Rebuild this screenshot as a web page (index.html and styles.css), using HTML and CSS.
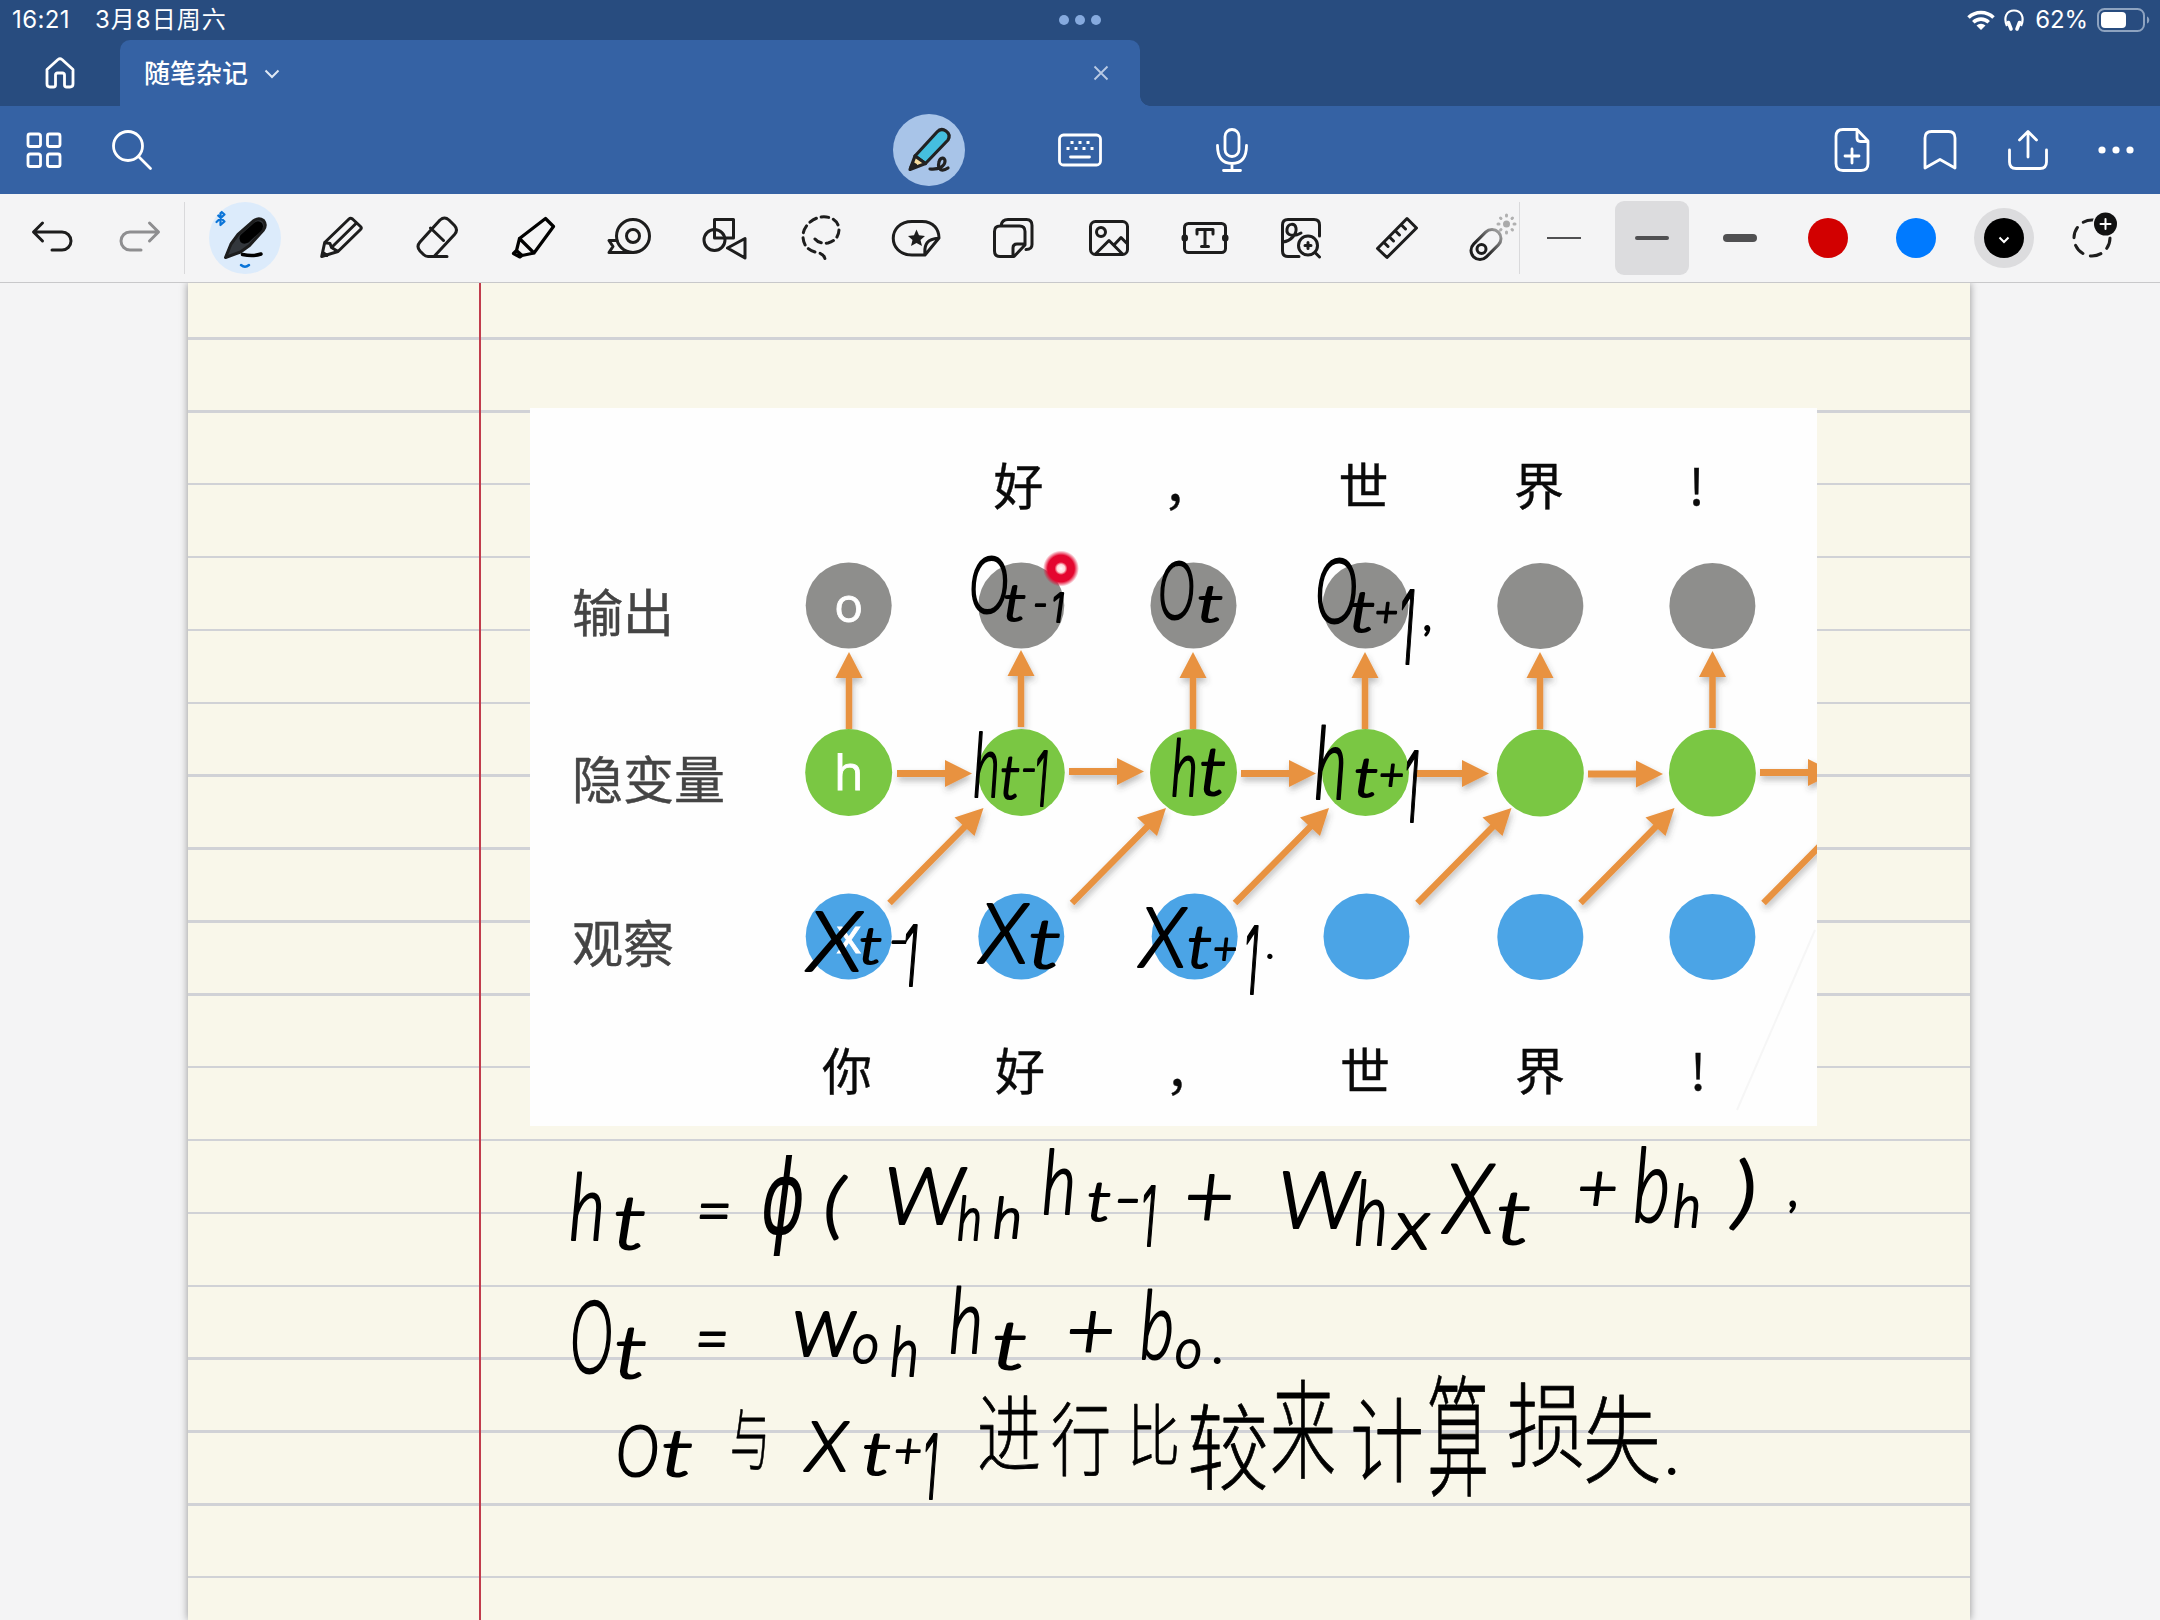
FILE: index.html
```html
<!DOCTYPE html>
<html lang="zh-CN">
<head>
<meta charset="utf-8">
<title>随笔杂记</title>
<link rel="stylesheet" href="styles.css">
</head>
<body>
<div class="app">
  <header class="top">
    <div class="status">
      <div class="status-left"><span class="time">16:21</span><span class="date">3月8日周六</span></div>
      <div class="multitask"><i></i><i></i><i></i></div>
      <div class="status-right">
        <svg class="wifi" viewBox="0 0 30 22"><path d="M2.500 8.500a18 18 0 0 1 25 0M7.300 13.200a11.200 11.200 0 0 1 15.400 0" fill="none" stroke="#fff" stroke-width="3.600"/><path d="M15 21l-4.500-4.500a6.500 6.500 0 0 1 9 0z" fill="#fff"/></svg>
        <svg class="phones" viewBox="0 0 20 22"><path d="M3 17C-1 8 3 1.500 10 1.500S21 8 17 17" fill="none" stroke="#fff" stroke-width="2.200"/><path d="M4.500 13.500l2.500 6.500M15.500 13.500L13 20" stroke="#fff" stroke-width="3.500" stroke-linecap="round"/></svg>
        <span class="percent">62%</span>
        <svg class="battery" viewBox="0 0 54 24"><rect x="1" y="1" width="46" height="22" rx="6.500" fill="none" stroke="#8ea3c0" stroke-width="2"/><rect x="4" y="4" width="25" height="16" rx="4" fill="#fff"/><path d="M50 8.500c3 1 3 6 0 7z" fill="#8ea3c0"/></svg>
      </div>
    </div>
    <div class="tabs">
      <div class="home"><svg class="icon" viewBox="-36 -36 72 72"><path d="M-13-3.500L-2-13.500q2-1.500 4 0L13-3.500V11q0 3-3 3H6.500q-2 0-2-2V2q0-2-2-2h-5q-2 0-2 2v10q0 2-2 2H-10q-3 0-3-3z"/></svg></div>
      <div class="tab">
        <span class="tab-title">随笔杂记</span>
        <svg class="tab-chevron" viewBox="0 0 16 10"><path d="M1.500 1.500L8 8l6.500-6.500"/></svg>
        <svg class="tab-close" viewBox="0 0 16 16"><path d="M1.500 1.500l13 13M14.500 1.500l-13 13"/></svg>
      </div>
      <div class="tab-foot"></div>
    </div>
  </header>

  <nav class="nav">
    <div class="nav-group nav-left">
      <svg class="icon" viewBox="-36 -36 72 72"><rect x="-16" y="-16" width="12.500" height="12.500" rx="2"/><rect x="3.500" y="-16" width="12.500" height="12.500" rx="2"/><rect x="-16" y="4" width="12.500" height="12.500" rx="2"/><rect x="3.500" y="4" width="12.500" height="12.500" rx="2"/></svg>
      <svg class="icon" viewBox="-36 -36 72 72"><circle cx="-4" cy="-4" r="14.500"/><path d="M7 7L18.500 18.500"/></svg>
    </div>
    <div class="nav-group nav-mid">
      <svg class="icon active" viewBox="-36 -36 72 72">
        <path d="M-14 6L8-18q4-4.500 9-1t2 9L-3.500 13.500z" fill="#45bfdf"/>
        <path d="M-14 6l-5 13.500L-3.500 13.500z" fill="#f6dc9c"/>
        <path d="M-18 17l4.500-2-2.500-1.500z" fill="#222"/>
        <path d="M1 19c9 1 15-3 15-8 0-4-5-4-6 1-2 8 3 10 9 6"/>
      </svg>
      <svg class="icon" viewBox="-36 -36 72 72"><rect x="-20.500" y="-15" width="41" height="30" rx="4"/><path d="M-9.500 7h19"/><g fill="#fff" stroke="none"><rect x="-9.500" y="-9" width="3" height="3"/><rect x="-1.500" y="-9" width="3" height="3"/><rect x="6.500" y="-9" width="3" height="3"/><rect x="-13.500" y="-3" width="3" height="3"/><rect x="-5.500" y="-3" width="3" height="3"/><rect x="2.500" y="-3" width="3" height="3"/><rect x="10.500" y="-3" width="3" height="3"/></g></svg>
      <svg class="icon" viewBox="-36 -36 72 72"><rect x="-7" y="-20.500" width="14" height="27" rx="7"/><path d="M-14.500-4.500C-14.500 8-9 13.500 0 13.500S14.500 8 14.500-4.500M0 14v6M-8.500 20.500h17"/></svg>
    </div>
    <div class="nav-group nav-right">
      <svg class="icon" viewBox="-36 -36 72 72"><path d="M5-20.500H-9q-7 0-7 7v27q0 7 7 7H9q7 0 7-7V-9zM5-20.500V-12q0 3.500 3.500 3.500H16M0-1v14M-7 6H7"/></svg>
      <svg class="icon" viewBox="-36 -36 72 72"><path d="M-15 18v-30q0-6.500 6.500-6.500h17q6.500 0 6.500 6.500v30L0 9.500z"/></svg>
      <svg class="icon" viewBox="-36 -36 72 72"><path d="M-18.500 0v12q0 6.500 6.500 6.500h24q6.500 0 6.500-6.500V0M0 7v-25M-8.500-10L0-18.500 8.500-10"/></svg>
      <svg class="icon" viewBox="-36 -36 72 72"><g fill="#fff" stroke="none"><circle cx="-14" r="3.600"/><circle r="3.600"/><circle cx="14" r="3.600"/></g></svg>
    </div>
  </nav>

  <section class="tools">
    <div class="history">
      <svg class="icon dark" viewBox="-36 -36 72 72"><path d="M-9.500-15l-9 9 9 9M-18-6H10a9 9 0 0 1 0 18H0"/></svg>
      <svg class="icon dim" viewBox="-36 -36 72 72"><path d="M9.500-15l9 9-9 9M18-6H-10a9 9 0 0 0 0 18H1"/></svg>
    </div>
    <div class="divider"></div>
    <div class="kit">
      <div class="cell"><svg class="icon dark pen" viewBox="-36 -36 72 72">
        <path d="M-19.500 19.500L-14 6-7-3.500 9-17.500q5-3.500 9.500 0 3.500 4.500 0 9.500L4.500 7.500l-9 6.500z" fill="#33373c"/>
        <path d="M-4.500-3L9-15q4-3.500 8 0 2.500 4-1 8L3.500 4.500q-5 2.500-8-.5-2-4 0-7z" fill="#000" stroke="none"/>
        <path d="M-2.500 16.500c7 1.500 13 1.500 18.500-.5" stroke="#000" stroke-width="3.500"/>
        <path d="M-4 27q4 3.500 8 0" stroke="#0a74d8" stroke-width="2.500"/>
        <path d="M-28.500-24l8 7.500-4 3.500v-14l4 3.500-8 7.500" stroke="#0a74d8" stroke-width="2.200"/>
      </svg></div>
      <div class="cell"><svg class="icon dark" viewBox="-36 -36 72 72"><path d="M-19.300 18.500l3-14L8-19q1.500-1.500 3.500 0L19.500-11.500q1.500 1.500 0 3L-3 13.500zM-16.300 4.500L-11 5.500l1.500 4 6.500 4M-9.500 9.500L15.500-15M-18 14.500l4 3"/></svg></div>
      <div class="cell"><svg class="icon dark" viewBox="-36 -36 72 72"><path d="M10 18.500H-9q-2.500 0-4.500-2l-3.500-3.500q-4-4.500 0-9L3-18q4.500-4 9 0l5.500 5.500q4 4.500 0 9L-2.500 18M-6.500-10L6.500 2.500"/></svg></div>
      <div class="cell"><svg class="icon marker" viewBox="-36 -36 72 72"><path d="M-13.500.5L12.500-19.500 20.500-11.500 1 15zM-13.500.5L-16.500 12.500-19.500 15.500-13 19-11 17.500 1 15M-16.500 12.500l5.500 5"/></svg></div>
      <div class="cell"><svg class="icon dark" viewBox="-36 -36 72 72"><circle cx="4" cy="-2" r="16.500"/><circle cx="4" cy="-2" r="6.500"/><path d="M4 14.500h-24l4-6-4-6h8"/></svg></div>
      <div class="cell"><svg class="icon dark" viewBox="-36 -36 72 72"><circle cx="-10.500" cy="2" r="10.500"/><path d="M-10.500 0v-18.500H8.500V0zM2.500 10L20 .5V20z"/></svg></div>
      <div class="cell"><svg class="icon dark" viewBox="-36 -36 72 72"><path d="M-6 1q4 5 13 4 11-3 11-14C17-19 8-22 0-21S-18-12-18-2C-18 8-12 13-4 14.500q7 1 8 6.500" stroke-dasharray="7.500 5"/></svg></div>
      <div class="cell"><svg class="icon dark" viewBox="-36 -36 72 72"><path d="M8 17H-5C-30 17-30-16.500-5-16.500H5C17-16.500 22-8 22 0zM22 0C10 1 7 6 8 17"/><path d="M-.5-8.500l2.500 5.800 6 .6L3.500 2l1.500 6-5.500-3L-6 8l1.500-6L-9-2.100l6-.6z" fill="#1d1d1d" stroke="none"/></svg></div>
      <div class="cell"><svg class="icon dark" viewBox="-36 -36 72 72"><path d="M1 18.500h-14q-5.500 0-5.500-5.500V-6.500q0-5.500 5.500-5.500H6.500q5.500 0 5.500 5.500V7zM0 18V10q0-4 4-4h8M-12-12.500q1-6 7-6H13.500q5.500 0 5.500 6V6.500q0 5-6 5"/></svg></div>
      <div class="cell"><svg class="icon dark" viewBox="-36 -36 72 72"><rect x="-18.500" y="-16.500" width="37" height="33" rx="5"/><circle cx="-8" cy="-6" r="4.500"/><path d="M-13 15.500L0 2.500 13 15.500M5 7L12-.5l6.500 6.500"/></svg></div>
      <div class="cell"><svg class="icon dark" viewBox="-36 -36 72 72"><rect x="-20.500" y="-14.500" width="41" height="29" rx="4"/><path d="M-8-4v-4.500H8V-4M0-8V8M-3.500 8.500h7"/><rect x="-22" y="-2" width="3.500" height="4" rx="1.500" fill="#1d1d1d"/><rect x="18.500" y="-2" width="3.500" height="4" rx="1.500" fill="#1d1d1d"/></svg></div>
      <div class="cell"><svg class="icon dark" viewBox="-36 -36 72 72"><path d="M18.500-2v-11q0-5.500-5.500-5.500h-26q-5.500 0-5.500 5.500v26q0 5.500 5.500 5.500H-2"/><path d="M-18 4c8-1 14-8 13-14-1-5-8-5-9 1-1 7 7 8 14 4"/><circle cx="7" cy="7.500" r="9.500"/><path d="M14 14.500l4.500 4.500M7 4.500v6M4 7.500h6"/></svg></div>
      <div class="cell"><svg class="icon dark" viewBox="-36 -36 72 72"><path d="M-19.500 10.500L10-19.500 19.500-10-10 19.500zM-13 4.500l4 4M-7.500-1l4 4M-1.500-7l4 4M4.500-13l4 4"/></svg></div>
      <div class="cell last"><svg class="icon dark" viewBox="-36 -36 72 72"><defs><linearGradient id="fade" x1="0" y1="0" x2="1" y2="0"><stop offset=".3" stop-color="#1d1d1d"/><stop offset="1" stop-color="#999"/></linearGradient></defs><rect x="-17.500" y="-9" width="35" height="18" rx="9" transform="translate(-3 6.500) rotate(-45)" stroke="url(#fade)"/><circle cx="-7.500" cy="11" r="4.500"/><circle cx="17.500" cy="-14" r="3.500" fill="#aaa" stroke="none"/><path d="M17.500-22v-1M17.500-6v1M10-14h-1M25-14h1M12-19.500l-.5-.5M23-19.500l.5-.5M12-8.500l-.5.5M23-8.500l.5.5" stroke="#b0b0b0"/></svg></div>
    </div>
    <div class="divider"></div>
    <div class="strokes">
      <div class="cell"><i class="bar thin"></i></div>
      <div class="cell"><div class="chosen"><i class="bar medium"></i></div></div>
      <div class="cell"><i class="bar thick"></i></div>
      <div class="cell"><i class="swatch red"></i></div>
      <div class="cell"><i class="swatch blue"></i></div>
      <div class="cell"><div class="ring"><div class="swatch black"><svg viewBox="0 0 12 8"><path d="M1.500 1.500L6 6l4.500-4.500"/></svg></div></div></div>
      <div class="cell"><svg class="icon dark" viewBox="-36 -36 72 72"><circle cx="0" cy="0" r="18" stroke-dasharray="11 7.800"/><circle cx="13.500" cy="-14" r="13" fill="#f4f4f5" stroke="none"/><circle cx="13.500" cy="-14" r="11.500" fill="#111" stroke="none"/><path d="M13.500-19v10M8.500-14h10" stroke="#fff" stroke-width="2"/></svg></div>
    </div>
  </section>

  <main class="desk">
    <div class="paper">
      <!-- note canvas, in window coordinates -->
      <svg class="canvas" viewBox="188 283 1782 1337">
        <defs>
          <g id="up"><path d="M0 24V77" stroke="#e8923f" stroke-width="6.500"/><path d="M0 0L13.500 26h-27z" fill="#e8923f"/></g>
          <g id="right"><path d="M0 0H50" stroke="#e8923f" stroke-width="7"/><path d="M75 0L48-13.500v27z" fill="#e8923f"/></g>
          <g id="diag"><path d="M0 0L80-81" stroke="#e8923f" stroke-width="6.500"/><path d="M94-95L65-85.500 85-67z" fill="#e8923f"/></g>
          <filter id="soft" x="-20%" y="-20%" width="140%" height="140%"><feDropShadow dx="1" dy="4" stdDeviation="3" flood-color="#444" flood-opacity=".35"/></filter>
          <clipPath id="frame"><rect x="530" y="408" width="1287" height="718"/></clipPath>
          <radialGradient id="laser"><stop offset="0" stop-color="#fff"/><stop offset=".22" stop-color="#ffd9d9"/><stop offset=".36" stop-color="#e4062f"/><stop offset=".74" stop-color="#e4062f"/><stop offset="1" stop-color="#e4062f" stop-opacity="0"/></radialGradient>
        </defs>
        <rect x="530" y="408" width="1287" height="718" fill="#fefefe"/>
        <g clip-path="url(#frame)">
          <path d="M1815 930L1737 1110" stroke="#f6f6f6" stroke-width="2"/>
          <g filter="url(#soft)">
            <use href="#up" x="849" y="652"/><use href="#up" x="1021" y="650"/><use href="#up" x="1193" y="652"/><use href="#up" x="1365" y="652"/><use href="#up" x="1540" y="652"/><use href="#up" x="1712.500" y="651"/>
            <use href="#right" x="897" y="773.500"/><use href="#right" x="1069" y="771.500"/><use href="#right" x="1241" y="773.500"/><use href="#right" x="1414" y="773.500"/><use href="#right" x="1588" y="774"/><use href="#right" x="1760" y="772.500"/>
            <use href="#diag" x="889.500" y="903"/><use href="#diag" x="1072" y="903"/><use href="#diag" x="1235" y="903"/><use href="#diag" x="1417.500" y="903"/><use href="#diag" x="1580.500" y="903"/><use href="#diag" x="1763.500" y="903"/>
          </g>
          <g fill="#8e8e8c"><circle cx="848.700" cy="605.500" r="43"/><circle cx="1021.300" cy="605.500" r="43"/><circle cx="1193.500" cy="605.500" r="43"/><circle cx="1365.500" cy="605.500" r="43"/><circle cx="1540.300" cy="606" r="43"/><circle cx="1712.400" cy="606" r="43"/></g>
          <g fill="#7ac743"><circle cx="848.700" cy="772.500" r="43.500"/><circle cx="1021.300" cy="772.500" r="43.500"/><circle cx="1193.500" cy="772.500" r="43.500"/><circle cx="1365.500" cy="772.500" r="43.500"/><circle cx="1540.300" cy="773" r="43.500"/><circle cx="1712.400" cy="773" r="43.500"/></g>
          <g fill="#4ba4e6"><circle cx="848.700" cy="936.500" r="43"/><circle cx="1021.300" cy="936.500" r="43"/><circle cx="1194.700" cy="936.500" r="43"/><circle cx="1366.500" cy="936.500" r="43"/><circle cx="1540.300" cy="937" r="43"/><circle cx="1712.400" cy="937" r="43"/></g>
        </g>
        <g class="state"><text x="848.700" y="622">o</text><text x="848.700" y="790">h</text><text x="848.700" y="953">x</text></g>
        <g class="caption"><text x="572" y="632">输出</text><text x="572" y="798.500">隐变量</text><text x="572" y="963">观察</text></g>
        <g class="words">
          <text x="1018.500" y="505">好</text><text x="1188" y="505">，</text><text x="1363.500" y="505">世</text><text x="1539" y="505">界</text><text x="1696.500" y="505">!</text>
          <text x="847" y="1089.500">你</text><text x="1020" y="1089.500">好</text><text x="1190" y="1089.500">，</text><text x="1365" y="1089.500">世</text><text x="1540" y="1089.500">界</text><text x="1698" y="1089.500">!</text>
        </g>
        <circle cx="1061" cy="568.500" r="18" fill="url(#laser)"/>
        <g class="ink">
          <text><tspan x="969" y="613" font-size="79" textLength="40" lengthAdjust="spacingAndGlyphs">O</tspan><tspan x="1003" y="621" font-size="51" textLength="23" lengthAdjust="spacingAndGlyphs">t</tspan><tspan x="1033" y="618" font-size="44" textLength="15" lengthAdjust="spacingAndGlyphs">-</tspan><tspan class="one" x="1051" y="622" font-size="40" textLength="13" lengthAdjust="spacingAndGlyphs">1</tspan></text>
          <text><tspan x="1158" y="619" font-size="80" textLength="37" lengthAdjust="spacingAndGlyphs">O</tspan><tspan x="1197" y="622" font-size="51" textLength="26" lengthAdjust="spacingAndGlyphs">t</tspan></text>
          <text><tspan x="1315" y="623" font-size="90" textLength="43" lengthAdjust="spacingAndGlyphs">O</tspan><tspan x="1349" y="632" font-size="57" textLength="26" lengthAdjust="spacingAndGlyphs">t</tspan><tspan x="1375" y="626" font-size="40" textLength="23" lengthAdjust="spacingAndGlyphs">+</tspan><tspan class="one" x="1398" y="664" font-size="102" textLength="17" lengthAdjust="spacingAndGlyphs">1</tspan><tspan x="1424" y="630" font-size="44">,</tspan></text>
          <text><tspan x="973" y="797" font-size="88" textLength="27" lengthAdjust="spacingAndGlyphs">h</tspan><tspan x="1000" y="799" font-size="62" textLength="20" lengthAdjust="spacingAndGlyphs">t</tspan><tspan x="1021" y="783" font-size="44" textLength="16" lengthAdjust="spacingAndGlyphs">-</tspan><tspan class="one" x="1034" y="806" font-size="75" textLength="14" lengthAdjust="spacingAndGlyphs">1</tspan></text>
          <text><tspan x="1171" y="796" font-size="78" textLength="27" lengthAdjust="spacingAndGlyphs">h</tspan><tspan x="1199" y="795" font-size="68" textLength="27" lengthAdjust="spacingAndGlyphs">t</tspan></text>
          <text><tspan x="1314" y="799" font-size="100" textLength="33" lengthAdjust="spacingAndGlyphs">h</tspan><tspan x="1354" y="797" font-size="55" textLength="24" lengthAdjust="spacingAndGlyphs">t</tspan><tspan x="1379" y="790" font-size="44" textLength="25" lengthAdjust="spacingAndGlyphs">+</tspan><tspan class="one" x="1403" y="822" font-size="97" textLength="16" lengthAdjust="spacingAndGlyphs">1</tspan></text>
          <text><tspan x="808" y="971" font-size="83" textLength="54" lengthAdjust="spacingAndGlyphs">X</tspan><tspan x="859" y="964" font-size="52" textLength="23" lengthAdjust="spacingAndGlyphs">t</tspan><tspan x="889" y="955" font-size="44" textLength="20" lengthAdjust="spacingAndGlyphs">-</tspan><tspan class="one" x="902" y="986" font-size="84" textLength="16" lengthAdjust="spacingAndGlyphs">1</tspan></text>
          <text><tspan x="980" y="963" font-size="82" textLength="48" lengthAdjust="spacingAndGlyphs">X</tspan><tspan x="1028" y="968" font-size="70" textLength="33" lengthAdjust="spacingAndGlyphs">t</tspan></text>
          <text><tspan x="1140" y="967" font-size="82" textLength="46" lengthAdjust="spacingAndGlyphs">X</tspan><tspan x="1187" y="968" font-size="60" textLength="25" lengthAdjust="spacingAndGlyphs">t</tspan><tspan x="1213" y="964" font-size="44" textLength="24" lengthAdjust="spacingAndGlyphs">+</tspan><tspan class="one" x="1243" y="994" font-size="94" textLength="16" lengthAdjust="spacingAndGlyphs">1</tspan><tspan x="1267" y="958" font-size="34">.</tspan></text>

          <text><tspan x="569" y="1240" font-size="93" textLength="36" lengthAdjust="spacingAndGlyphs">h</tspan><tspan x="613" y="1249" font-size="74" textLength="33" lengthAdjust="spacingAndGlyphs">t</tspan><tspan x="696" y="1235" font-size="70" textLength="36" lengthAdjust="spacingAndGlyphs">=</tspan><tspan class="phi" x="761" y="1234" font-size="103" textLength="44" lengthAdjust="spacingAndGlyphs">ϕ</tspan><tspan x="823" y="1230" font-size="72" textLength="22" lengthAdjust="spacingAndGlyphs">(</tspan><tspan x="884" y="1224" font-size="78" textLength="80" lengthAdjust="spacingAndGlyphs">W</tspan><tspan x="957" y="1240" font-size="62" textLength="25" lengthAdjust="spacingAndGlyphs">h</tspan><tspan x="993" y="1238" font-size="58" textLength="29" lengthAdjust="spacingAndGlyphs">h</tspan><tspan x="1042" y="1214" font-size="88" textLength="34" lengthAdjust="spacingAndGlyphs">h</tspan><tspan x="1087" y="1221" font-size="56" textLength="24" lengthAdjust="spacingAndGlyphs">t</tspan><tspan x="1114" y="1217" font-size="56" textLength="28" lengthAdjust="spacingAndGlyphs">-</tspan><tspan class="one" x="1140" y="1246" font-size="83" textLength="16" lengthAdjust="spacingAndGlyphs">1</tspan><tspan x="1184" y="1228" font-size="90" textLength="50" lengthAdjust="spacingAndGlyphs">+</tspan><tspan x="1278" y="1228" font-size="78" textLength="80" lengthAdjust="spacingAndGlyphs">W</tspan><tspan x="1354" y="1245" font-size="88" textLength="34" lengthAdjust="spacingAndGlyphs">h</tspan><tspan x="1394" y="1249" font-size="72" textLength="36" lengthAdjust="spacingAndGlyphs">x</tspan><tspan x="1444" y="1233" font-size="97" textLength="50" lengthAdjust="spacingAndGlyphs">X</tspan><tspan x="1496" y="1244" font-size="75" textLength="35" lengthAdjust="spacingAndGlyphs">t</tspan><tspan x="1577" y="1211" font-size="68" textLength="41" lengthAdjust="spacingAndGlyphs">+</tspan><tspan x="1633" y="1222" font-size="103" textLength="37" lengthAdjust="spacingAndGlyphs">b</tspan><tspan x="1673" y="1227" font-size="60" textLength="28" lengthAdjust="spacingAndGlyphs">h</tspan><tspan x="1732" y="1219" font-size="78" textLength="25" lengthAdjust="spacingAndGlyphs">)</tspan><tspan x="1789" y="1206" font-size="50">,</tspan></text>

          <text><tspan x="570" y="1373" font-size="100" textLength="43" lengthAdjust="spacingAndGlyphs">O</tspan><tspan x="614" y="1378" font-size="73" textLength="33" lengthAdjust="spacingAndGlyphs">t</tspan><tspan x="695" y="1363" font-size="70" textLength="34" lengthAdjust="spacingAndGlyphs">=</tspan><tspan x="792" y="1356" font-size="88" textLength="64" lengthAdjust="spacingAndGlyphs">w</tspan><tspan x="852" y="1363" font-size="56" textLength="27" lengthAdjust="spacingAndGlyphs">o</tspan><tspan x="890" y="1376" font-size="69" textLength="29" lengthAdjust="spacingAndGlyphs">h</tspan><tspan x="949" y="1353" font-size="90" textLength="34" lengthAdjust="spacingAndGlyphs">h</tspan><tspan x="992" y="1369" font-size="68" textLength="35" lengthAdjust="spacingAndGlyphs">t</tspan><tspan x="1066" y="1359" font-size="80" textLength="49" lengthAdjust="spacingAndGlyphs">+</tspan><tspan x="1140" y="1359" font-size="95" textLength="34" lengthAdjust="spacingAndGlyphs">b</tspan><tspan x="1175" y="1368" font-size="56" textLength="27" lengthAdjust="spacingAndGlyphs">o</tspan><tspan x="1213" y="1363" font-size="50">.</tspan></text>

          <text><tspan x="616" y="1476" font-size="71" textLength="43" lengthAdjust="spacingAndGlyphs">O</tspan><tspan x="661" y="1476" font-size="65" textLength="32" lengthAdjust="spacingAndGlyphs">t</tspan><tspan class="han" x="730" y="1465" font-size="68" textLength="40" lengthAdjust="spacingAndGlyphs">与</tspan><tspan x="806" y="1471" font-size="70" textLength="42" lengthAdjust="spacingAndGlyphs">X</tspan><tspan x="862" y="1475" font-size="60" textLength="29" lengthAdjust="spacingAndGlyphs">t</tspan><tspan x="894" y="1467" font-size="48" textLength="28" lengthAdjust="spacingAndGlyphs">+</tspan><tspan class="one" x="922" y="1499" font-size="90" textLength="16" lengthAdjust="spacingAndGlyphs">1</tspan><tspan class="han" x="977" y="1465" font-size="84" textLength="64" lengthAdjust="spacingAndGlyphs">进</tspan><tspan class="han" x="1051" y="1469" font-size="80" textLength="60" lengthAdjust="spacingAndGlyphs">行</tspan><tspan class="han" x="1127" y="1461" font-size="68" textLength="53" lengthAdjust="spacingAndGlyphs">比</tspan><tspan class="han" x="1187" y="1483" font-size="94" textLength="82" lengthAdjust="spacingAndGlyphs">较</tspan><tspan class="han" x="1270" y="1470" font-size="108" textLength="66" lengthAdjust="spacingAndGlyphs">来</tspan><tspan class="han" x="1350" y="1475" font-size="92" textLength="74" lengthAdjust="spacingAndGlyphs">计</tspan><tspan class="han" x="1427" y="1486" font-size="132" textLength="62" lengthAdjust="spacingAndGlyphs">算</tspan><tspan class="han" x="1507" y="1460" font-size="92" textLength="78" lengthAdjust="spacingAndGlyphs">损</tspan><tspan class="han" x="1583" y="1475" font-size="96" textLength="78" lengthAdjust="spacingAndGlyphs">失</tspan><tspan x="1667" y="1474" font-size="56">.</tspan></text>
        </g>
      </svg>
    </div>
  </main>
</div>
</body>
</html>
```
FILE: styles.css
```css
* { box-sizing: border-box; }
body { margin: 0; font-family: Inter, "Noto Sans CJK SC", sans-serif; }
.app { width: 2160px; height: 1620px; display: flex; flex-direction: column; overflow: hidden; background: #f4f4f5; }
.icon { width: 72px; height: 72px; flex: none; fill: none; stroke: #fff; stroke-width: 2.8; stroke-linecap: round; stroke-linejoin: round; }
.icon.dark { stroke: #1d1d1d; stroke-width: 3; }
.icon.marker { stroke: #000; stroke-width: 3.2; }
.icon.dim { stroke: #8e8e90; stroke-width: 3; }

.top { height: 106px; background: #284c7f; color: #fff; flex: none; }
.status { height: 40px; display: grid; grid-template-columns: 1fr auto 1fr; align-items: center; font-size: 24px; line-height: 40px; }
.status-left { display: flex; gap: 25px; padding-left: 12px; }
.time { letter-spacing: .4px; }
.date { letter-spacing: 1px; }
.multitask { display: flex; gap: 6px; }
.multitask i { width: 10px; height: 10px; border-radius: 50%; background: #86aade; }
.status-right { display: flex; justify-content: flex-end; align-items: center; padding-right: 9px; }
.wifi { width: 30px; height: 22px; margin-right: 8px; }
.phones { width: 20px; height: 22px; margin-right: 11px; }
.percent { margin-right: 9px; letter-spacing: -.1px; }
.battery { width: 54px; height: 24px; }
.tabs { height: 66px; display: flex; }
.home { width: 120px; display: flex; align-items: center; justify-content: center; }
.tab { width: 1020px; display: flex; align-items: center; background: #3562a4; border-radius: 10px 10px 0 0; padding: 0 31px 0 24px; }
.tab-title { font-size: 26px; font-weight: 500; line-height: 64px; padding-top: 2px; }
.tab-chevron { width: 16px; height: 10px; margin-left: 16px; margin-top: 1px; fill: none; stroke: #dfe8f5; stroke-width: 2; }
.tab-close { width: 16px; height: 16px; margin-left: auto; fill: none; stroke: #b9cae4; stroke-width: 1.8; }
.tab-foot { width: 10px; height: 10px; align-self: flex-end; background: radial-gradient(circle at 100% 0, transparent 9.5px, #3562a4 10px); }

.nav { height: 88px; flex: none; background: #3562a4; display: grid; grid-template-columns: 1fr auto 1fr; align-items: center; }
.nav-group { display: flex; }
.nav-left, .nav-right { gap: 16px; padding: 0 8px; }
.nav-right { justify-content: flex-end; }
.nav-mid { gap: 79.5px; }
.icon.active { background: #a8c4e8; border-radius: 50%; stroke: #222; stroke-width: 3.2; }

.tools { height: 89px; flex: none; display: flex; align-items: center; background: #f4f4f5; border-bottom: 1px solid #c8c8ca; }
.history { display: flex; gap: 16px; width: 184px; padding-left: 16px; }
.divider { width: 1px; height: 72px; background: #d9d9db; flex: none; }
.kit { display: flex; width: 1334px; padding-left: 12px; }
.cell { width: 96px; height: 88px; display: flex; align-items: center; justify-content: center; flex: none; }
.cell.last { width: 88px; }
.pen { background: #dcebfb; border-radius: 50%; }
.strokes { display: flex; }
.strokes .cell { width: 88px; }
.bar { display: block; width: 34px; background: #505052; }
.thin { height: 2px; }
.medium { height: 4px; border-radius: 2px; }
.thick { height: 8px; border-radius: 4px; }
.chosen { width: 74px; height: 74px; border-radius: 9px; background: #dcdcde; display: flex; align-items: center; justify-content: center; }
.swatch { width: 40px; height: 40px; border-radius: 50%; display: flex; align-items: center; justify-content: center; }
.red { background: #d20000; }
.blue { background: #007aff; }
.black { background: #000; }
.black svg { width: 12px; height: 8px; margin-top: 3px; fill: none; stroke: #fff; stroke-width: 2; }
.ring { width: 60px; height: 60px; border-radius: 50%; background: #dcdcde; display: flex; align-items: center; justify-content: center; }

.desk { flex: 1; display: flex; justify-content: center; padding-right: 2px; min-height: 0; overflow: hidden; }
.paper {
  width: 1782px; height: 1337px; box-shadow: 0 0 8px rgba(0, 0, 0, .4);
  background:
    linear-gradient(90deg, transparent 291px, #c13c4c 291px, #c13c4c 293.5px, transparent 293.5px),
    repeating-linear-gradient(180deg, transparent 0, transparent 54.2px, #d1d2d6 54.2px, #d1d2d6 56.7px, transparent 56.7px, transparent 72.87px),
    #f9f7ea;
}
.canvas { display: block; width: 1782px; height: 1337px; }
.state { font-family: "Open Sans", sans-serif; font-size: 48px; fill: #fff; stroke: #fff; stroke-width: .8; text-anchor: middle; }
.caption { font-family: "Noto Sans CJK SC", sans-serif; font-size: 51px; fill: #444; stroke: #444; stroke-width: .4; }
.words { font-family: "Noto Sans CJK SC", sans-serif; font-size: 50px; fill: #0a0a0a; stroke: #0a0a0a; stroke-width: .4; text-anchor: middle; }
.ink { font-family: Lato, sans-serif; font-style: italic; font-weight: 300; fill: #000; stroke: #000; stroke-width: 2.2; stroke-linejoin: round; }
.one { font-family: Inter, sans-serif; font-weight: 300; }
.phi { font-family: "DejaVu Sans", sans-serif; font-weight: 200; stroke-width: 0; }
.han { font-family: "Noto Sans CJK SC", sans-serif; font-weight: 300; font-style: normal; stroke-width: .8; }
```
